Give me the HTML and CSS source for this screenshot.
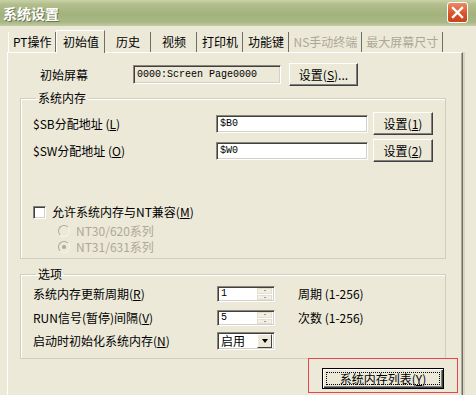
FILE: index.html
```html
<!DOCTYPE html>
<html lang="zh-CN">
<head>
    <meta charset="UTF-8">
    <title>系统设置</title>
    <link rel="stylesheet" href="styles.css">
</head>
<body>
    <div class="window">
        <div class="titlebar">
            <span class="title">系统设置</span>
            <span class="close">
                <svg width="13" height="13" viewBox="0 0 13 13">
                    <path d="M2 2 L11 11 M11 2 L2 11" stroke="#fff" stroke-width="2.4" stroke-linecap="square"/>
                </svg>
            </span>
        </div>

        <div class="tabs">
            <div class="tab first">PT操作</div>
            <div class="tab active">初始值</div>
            <div class="tab">历史</div>
            <div class="tab">视频</div>
            <div class="tab">打印机</div>
            <div class="tab">功能键</div>
            <div class="tab disabled">NS手动终端</div>
            <div class="tab disabled">最大屏幕尺寸</div>
        </div>

        <div class="panel">
            <div class="screen-row">
                <span class="screen-label">初始屏幕</span>
                <div class="field readonly screen-field mono">0000:Screen Page0000</div>
                <button class="btn btn-screen">设置(<u>S</u>)...</button>
            </div>

            <fieldset class="group group-mem">
                <legend>系统内存</legend>
                <div class="addr-row first-row">
                    <span class="addr-label">$SB分配地址 (<u>L</u>)</span>
                    <div class="field addr-field mono">$B0</div>
                    <button class="btn btn-set">设置(<u>1</u>)</button>
                </div>
                <div class="addr-row">
                    <span class="addr-label">$SW分配地址 (<u>O</u>)</span>
                    <div class="field addr-field mono">$W0</div>
                    <button class="btn btn-set">设置(<u>2</u>)</button>
                </div>
                <div class="check-row">
                    <span class="checkbox"></span>
                    <span>允许系统内存与NT兼容(<u>M</u>)</span>
                </div>
                <div class="radio-row first-radio">
                    <span class="radio"></span>
                    <span>NT30/620系列</span>
                </div>
                <div class="radio-row">
                    <span class="radio checked"></span>
                    <span>NT31/631系列</span>
                </div>
            </fieldset>

            <fieldset class="group group-opt">
                <legend>选项</legend>
                <div class="opt-row row-1">
                    <span class="opt-label">系统内存更新周期(<u>R</u>)</span>
                    <div class="field spin">
                        <span class="spin-value mono">1</span>
                        <span class="spin-btns"><span class="up"></span><span class="down"></span></span>
                    </div>
                    <span class="unit">周期 (1-256)</span>
                </div>
                <div class="opt-row row-2">
                    <span class="opt-label">RUN信号(暂停)间隔(<u>V</u>)</span>
                    <div class="field spin">
                        <span class="spin-value mono">5</span>
                        <span class="spin-btns"><span class="up"></span><span class="down"></span></span>
                    </div>
                    <span class="unit">次数 (1-256)</span>
                </div>
                <div class="opt-row row-3">
                    <span class="opt-label">启动时初始化系统内存(<u>N</u>)</span>
                    <div class="field combo">
                        <span class="combo-value">启用</span>
                        <span class="combo-btn"><span class="arrow"></span></span>
                    </div>
                </div>
            </fieldset>

            <div class="footer">
                <div class="highlight">
                    <button class="btn btn-default"><span class="focus">系统内存列表(<u>Y</u>)</span></button>
                </div>
            </div>
        </div>
    </div>
</body>
</html>
```

FILE: styles.css
```css
* {
    box-sizing: border-box;
}

body {
    margin: 0;
    width: 476px;
    height: 395px;
    overflow: hidden;
    background: #ece9d8;
    font-family: "Noto Sans CJK SC", sans-serif;
    font-size: 12px;
    line-height: 14px;
    color: #000;
}

u {
    text-decoration: underline;
}

.mono {
    font-family: "Liberation Mono", "Noto Sans CJK SC", monospace;
    font-size: 10px;
}

/* title bar */
.titlebar {
    height: 26px;
    display: flex;
    align-items: center;
    justify-content: space-between;
    padding: 0 8px 0 3px;
    background: linear-gradient(to bottom, #c9d1a8 0%, #b1bd8b 18%, #a3b27d 55%, #a9b784 85%, #c3cba3 100%);
}

.title {
    color: #fff;
    font-weight: bold;
    font-size: 14px;
    text-shadow: 1px 1px 0 #6c7656;
}

.close {
    width: 21px;
    height: 21px;
    margin-top: -2px;
    border: 1px solid #fff;
    border-radius: 3px;
    background: linear-gradient(to bottom, #ec8a66, #d8542c 55%, #c9431c);
    display: flex;
    align-items: center;
    justify-content: center;
}

/* tabs */
.tabs {
    display: flex;
    align-items: flex-end;
    height: 22px;
    margin-top: 4px;
    padding-left: 8px;
}

.tab {
    height: 20px;
    min-width: 46px;
    padding: 0 4px;
    text-align: center;
    line-height: 20px;
    border-right: 1px solid #716f64;
    white-space: nowrap;
}

.tab.first {
    border-left: 1px solid #fff;
}

.tab.active {
    height: 23px;
    margin-bottom: -1px;
    line-height: 22px;
    background: #ece9d8;
    border-left: 1px solid #fff;
    border-top: 1px solid #fff;
    position: relative;
    z-index: 1;
    min-width: 49px;
}

.tab.disabled {
    color: #aca899;
}

/* panel */
.panel {
    margin-left: 7px;
    width: 456px;
    height: 343px;
    overflow: hidden;
    border-top: 1px solid #fff;
    border-left: 1px solid #fff;
    border-right: 1px solid #716f64;
    box-shadow: inset -1px 0 #aca899, 2px 0 0 #d8d5c6;
    padding-top: 10px;
}

.screen-row {
    display: flex;
    align-items: center;
    padding-left: 32px;
    height: 23px;
}

.screen-label {
    width: 93px;
}

.field {
    border: 1px solid;
    border-color: #8a877a #fff #fff #8a877a;
    box-shadow: inset 1px 1px #404040, inset -1px -1px #d4d0c8;
    background: #fff;
    padding: 0 3px;
    display: flex;
    align-items: center;
    white-space: nowrap;
}

.field.readonly {
    background: #ece9d8;
}

.screen-field {
    width: 148px;
    height: 19px;
}

.btn {
    font-family: inherit;
    font-size: 12px;
    line-height: 14px;
    background: #ece9d8;
    color: #000;
    border: 1px solid;
    border-color: #fff #404040 #404040 #fff;
    box-shadow: inset -1px -1px #808080;
    padding: 0;
    margin: 0;
}

.btn-screen {
    width: 69px;
    height: 23px;
    margin-left: 8px;
}

/* group boxes */
.group {
    margin: 0 0 0 12px;
    width: 426px;
    padding: 0 0 0 12px;
    border: 1px solid #d0cebf;
    box-shadow: 1px 1px 0 #fff inset;
    min-width: 0;
}

.group legend {
    margin-left: 3px;
    padding: 0 2px;
    line-height: 14px;
}

.group-mem {
    margin-top: 5px;
    padding-bottom: 3px;
}

.addr-row {
    display: flex;
    align-items: center;
    height: 23px;
    margin-top: 4px;
}

.addr-row.first-row {
    margin-top: 7px;
}

.addr-label {
    width: 183px;
}

.addr-field {
    width: 152px;
    height: 18px;
}

.btn-set {
    width: 60px;
    height: 23px;
    margin-left: 5px;
}

.check-row {
    display: flex;
    align-items: center;
    height: 16px;
    margin-top: 42px;
}

.checkbox {
    width: 13px;
    height: 13px;
    margin-right: 6px;
    background: #fff;
    border: 1px solid;
    border-color: #808080 #fff #fff #808080;
    box-shadow: inset 1px 1px #404040, inset -1px -1px #d4d0c8;
}

.radio-row {
    display: flex;
    align-items: center;
    height: 16px;
    padding-left: 25px;
    color: #aca899;
}

.radio-row.first-radio {
    margin-top: 3px;
}

.radio {
    width: 12px;
    height: 12px;
    margin-right: 6px;
    border-radius: 50%;
    border: 1px solid #aca899;
    border-right-color: #f4f3ee;
    border-bottom-color: #f4f3ee;
    background: #ece9d8;
    display: flex;
    align-items: center;
    justify-content: center;
}

.radio.checked::after {
    content: "";
    width: 4px;
    height: 4px;
    border-radius: 50%;
    background: #aca899;
}

.group-opt {
    margin-top: 8px;
    padding-bottom: 8px;
}

.opt-row {
    display: flex;
    align-items: center;
}

.opt-row.row-1 {
    margin-top: 5px;
    height: 16px;
}

.opt-row.row-2 {
    margin-top: 8px;
    height: 16px;
}

.opt-row.row-3 {
    margin-top: 6px;
    height: 18px;
}

.opt-label {
    width: 184px;
}

.spin {
    width: 58px;
    height: 16px;
    padding: 0 2px 0 3px;
    justify-content: space-between;
}

.spin-btns {
    width: 15px;
    height: 12px;
    display: flex;
    flex-direction: column;
    gap: 1px;
}

.spin-btns span {
    flex: 1;
    background: #f1efe4;
    border: 1px solid #e2dfd0;
    display: flex;
    align-items: center;
    justify-content: center;
}

.spin-btns span::after {
    content: "";
    width: 2px;
    height: 1px;
    background: #9d9a8a;
}

.unit {
    margin-left: 23px;
}

.combo {
    width: 58px;
    height: 18px;
    padding: 0 2px 0 3px;
    justify-content: space-between;
}

.combo-btn {
    width: 15px;
    height: 14px;
    background: #ece9d8;
    border: 1px solid;
    border-color: #fff #404040 #404040 #fff;
    display: flex;
    align-items: center;
    justify-content: center;
}

.combo-btn .arrow {
    width: 0;
    height: 0;
    border-left: 3.5px solid transparent;
    border-right: 3.5px solid transparent;
    border-top: 4px solid #000;
}

/* bottom */
.footer {
    display: flex;
    justify-content: flex-end;
    margin-top: -1px;
    padding-right: 4px;
}

.highlight {
    width: 150px;
    height: 35px;
    border: 1px solid #e2474b;
    padding: 9px 0 0 13px;
}

.btn-default {
    width: 122px;
    height: 21px;
    border: 1px solid #000;
    box-shadow: inset 1px 1px #fff, inset -1px -1px #404040, inset -2px -2px #808080;
    padding: 3px;
    display: flex;
}

.focus {
    flex: 1;
    border: 1px dotted #000;
    display: flex;
    align-items: center;
    justify-content: center;
    line-height: 12px;
}
```
